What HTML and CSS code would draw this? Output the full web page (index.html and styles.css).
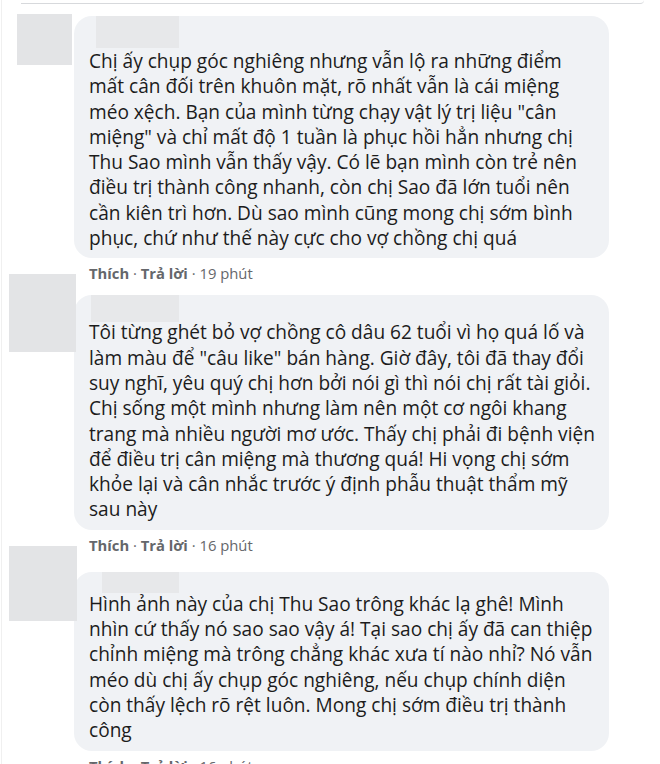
FILE: index.html
```html
<!DOCTYPE html>
<html lang="vi">
<head>
<meta charset="utf-8">
<title>Bình luận</title>
<link rel="stylesheet" href="styles.css">
</head>
<body>
<div class="page">
  <div class="prev-edge"></div>

  <div class="comment c1">
    <div class="avatar-col"><div class="avatar"></div></div>
    <div class="body">
      <div class="bubble">
        <div class="name"></div>
        <p class="text">Chị ấy chụp góc nghiêng nhưng vẫn lộ ra những điểm<br>mất cân đối trên khuôn mặt, rõ nhất vẫn là cái miệng<br>méo xệch. Bạn của mình từng chạy vật lý trị liệu "cân<br>miệng" và chỉ mất độ 1 tuần là phục hồi hẳn nhưng chị<br>Thu Sao mình vẫn thấy vậy. Có lẽ bạn mình còn trẻ nên<br>điều trị thành công nhanh, còn chị Sao đã lớn tuổi nên<br>cần kiên trì hơn. Dù sao mình cũng mong chị sớm bình<br>phục, chứ như thế này cực cho vợ chồng chị quá</p>
      </div>
      <div class="meta"><b>Thích</b> · <b>Trả lời</b> · 19 phút</div>
    </div>
  </div>

  <div class="comment c2">
    <div class="avatar-col"><div class="avatar"></div></div>
    <div class="body">
      <div class="bubble">
        <div class="name"></div>
        <p class="text">Tôi từng ghét bỏ vợ chồng cô dâu 62 tuổi vì họ quá lố và<br>làm màu để "câu like" bán hàng. Giờ đây, tôi đã thay đổi<br>suy nghĩ, yêu quý chị hơn bởi nói gì thì nói chị rất tài giỏi.<br>Chị sống một mình nhưng làm nên một cơ ngôi khang<br>trang mà nhiều người mơ ước. Thấy chị phải đi bệnh viện<br>để điều trị cân miệng mà thương quá! Hi vọng chị sớm<br>khỏe lại và cân nhắc trước ý định phẫu thuật thẩm mỹ<br>sau này</p>
      </div>
      <div class="meta"><b>Thích</b> · <b>Trả lời</b> · 16 phút</div>
    </div>
  </div>

  <div class="comment c3">
    <div class="avatar-col"><div class="avatar"></div></div>
    <div class="body">
      <div class="bubble">
        <div class="name"></div>
        <p class="text">Hình ảnh này của chị Thu Sao trông khác lạ ghê! Mình<br>nhìn cứ thấy nó sao sao vậy á! Tại sao chị ấy đã can thiệp<br>chỉnh miệng mà trông chẳng khác xưa tí nào nhỉ? Nó vẫn<br>méo dù chị ấy chụp góc nghiêng, nếu chụp chính diện<br>còn thấy lệch rõ rệt luôn. Mong chị sớm điều trị thành<br>công</p>
      </div>
      <div class="meta"><b>Thích</b> · <b>Trả lời</b> · 16 phút</div>
    </div>
  </div>
</div>
</body>
</html>
```

FILE: styles.css
```css
* { box-sizing: border-box; }

html, body {
  margin: 0;
  padding: 0;
  background: #ffffff;
}

.page {
  width: 660px;
  height: 764px;
  overflow: hidden;
  font-family: "Open Sans", "Noto Sans", "Liberation Sans", sans-serif;
  color: #1c1e21;
  border-left: 1px solid #f0f0f0;
  margin-left: 1px;
}

.prev-edge {
  margin-left: 19px;
  width: 623px;
  height: 4px;
  border-bottom: 1px solid #d7d9dc;
  border-bottom-right-radius: 6px;
}

.comment {
  display: flex;
  align-items: flex-start;
}

.c1 { margin-top: 11px; }

.avatar-col {
  flex: 0 0 72px;
  width: 72px;
}

.avatar {
  background: #e3e4e6;
  filter: blur(0.6px);
}

.c1 .avatar { margin: -1px 0 0 15px; width: 55px; height: 51px; }
.c2 .avatar { margin: -16px 0 0 7px; width: 67px; height: 78px; }
.c3 .avatar { margin: -16px 0 0 7px; width: 68px; height: 75px; }

.body {
  flex: 0 0 535px;
  width: 535px;
}

.bubble {
  background: #f0f2f5;
  border-radius: 18px;
  padding: 0 10px 7px 15px;
}

.name {
  background: #e7e8ea;
  filter: blur(0.6px);
}

.c1 .name { margin: 1px 0 0 7px; width: 83px; height: 32px; }
.c2 .name { margin: 5px 0 0 2px; width: 88px; height: 27px; }
.c3 .name { margin: 10px 0 0 13px; width: 77px; height: 21px; }

.text {
  margin: 1px 0 0 0;
  font-size: 19.1px;
  line-height: 25.3px;
  white-space: nowrap;
  color: #1c1c1c;
}

.c2 .text { margin-top: -2px; }
.c3 .text { margin-top: -1px; }

.meta {
  padding: 5px 0 7px 15px;
  font-size: 14.8px;
  line-height: 20px;
  color: #65676b;
  white-space: nowrap;
}

.meta b { font-weight: 700; }
```
